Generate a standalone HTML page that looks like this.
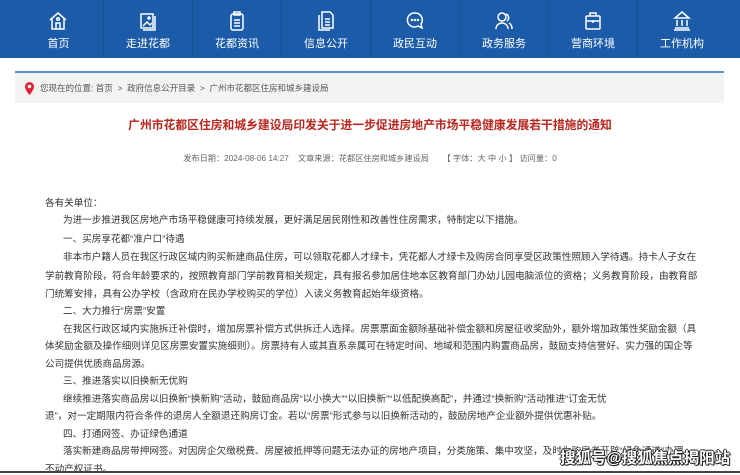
<!DOCTYPE html>
<html><head><meta charset="utf-8"><style>
*{margin:0;padding:0;box-sizing:border-box}
body{width:740px;height:473px;overflow:hidden;background:#fff;font-family:"Liberation Sans","Noto Sans CJK SC",sans-serif;position:relative}
.nav{position:absolute;left:0;top:0;width:740px;height:58px;background:#1b5ba8}
.it{position:absolute;top:0;width:89px;height:58px;color:#fff;text-align:center;font-size:11px;border-left:1px solid #16508f}
.it svg{position:absolute;left:35px;top:11px}
.it span{position:absolute;left:0;right:0;top:35px}
.line{position:absolute;left:15px;top:71px;width:709px;height:2px;background:#5a8fd0}
.bc{position:absolute;left:15px;top:73px;width:709px;height:30px;background:#f3f3f3;font-size:8.5px;color:#555;line-height:30px;padding-left:25px}
.pin{position:absolute;left:10px;top:9px}
.title{position:absolute;top:116px;left:0;width:740px;text-align:center;color:#b8261e;font-weight:bold;font-size:11.8px}
.meta{position:absolute;top:152px;left:0;width:740px;text-align:center;color:#666;font-size:8.2px}
.t{position:absolute;font-size:9.6px;color:#333;white-space:nowrap}
.wm{position:absolute;left:560px;top:446px;font-size:15.5px;font-weight:bold;color:#fff;text-shadow:-1px 0 #222,1px 0 #222,0 -1px #222,0 1px #222,1px 1px #222}
.bot{position:absolute;left:0;top:471px;width:740px;height:2px;background:#444}
</style></head><body>
<div class="nav">
<div class="it" style="left:14px;border-left:none"><svg width="18" height="20" viewBox="0 0 18 20" fill="none" stroke="#fff" stroke-width="1.5"><path d="M1 9L9 2l8 7M3 8v10h12V8M7 18v-6h4v6"/><circle cx="9" cy="8" r="1.3"/></svg><span>首页</span></div>
<div class="it" style="left:103px"><svg width="18" height="20" viewBox="0 0 18 20" fill="none" stroke="#fff" stroke-width="1.5"><rect x="2" y="3" width="12" height="14"/><path d="M16 5v14H4M4 15l4-4 3 3 2-2"/><circle cx="10" cy="7" r="1"/></svg><span>走进花都</span></div>
<div class="it" style="left:192px"><svg width="18" height="20" viewBox="0 0 18 20" fill="none" stroke="#fff" stroke-width="1.5"><rect x="3" y="3" width="12" height="16" rx="2"/><rect x="6" y="1" width="6" height="3"/><path d="M6 9h6M6 12h6M6 15h6"/></svg><span>花都资讯</span></div>
<div class="it" style="left:281px"><svg width="18" height="20" viewBox="0 0 18 20" fill="none" stroke="#fff" stroke-width="1.5"><path d="M5 1h8l3 3v13H5z"/><path d="M2 4v15h11M8 8h5M8 11h5M8 14h5"/></svg><span>信息公开</span></div>
<div class="it" style="left:370px"><svg width="18" height="20" viewBox="0 0 18 20" fill="none" stroke="#fff" stroke-width="1.5"><path d="M9 2a7 7 0 1 0 3 13l4 2-1-4A7 7 0 0 0 9 2z"/><circle cx="6" cy="9" r=".5"/><circle cx="9" cy="9" r=".5"/><circle cx="12" cy="9" r=".5"/></svg><span>政民互动</span></div>
<div class="it" style="left:459px"><svg width="18" height="20" viewBox="0 0 18 20" fill="none" stroke="#fff" stroke-width="1.5"><circle cx="7" cy="6" r="4"/><path d="M1 18c0-4 3-6 6-6s6 2 6 6M11 3a4 4 0 0 1 1 7M14 12c2 1 3 3 3 6"/></svg><span>政务服务</span></div>
<div class="it" style="left:548px"><svg width="18" height="20" viewBox="0 0 18 20" fill="none" stroke="#fff" stroke-width="1.5"><rect x="2" y="5" width="14" height="13" rx="1"/><path d="M6 5V2h6v3M2 10h14M9 9v3"/></svg><span>营商环境</span></div>
<div class="it" style="left:637px"><svg width="18" height="20" viewBox="0 0 18 20" fill="none" stroke="#fff" stroke-width="1.5"><path d="M9 1l7 6H2z M4 9v6M9 9v6M14 9v6M2 17h14M1 19h16"/></svg><span>工作机构</span></div>
</div>
<div class="line"></div>
<div class="bc"><svg class="pin" width="9" height="13" viewBox="0 0 9 13"><path d="M4.5 0A4.5 4.5 0 0 0 0 4.5C0 8 4.5 13 4.5 13S9 8 9 4.5A4.5 4.5 0 0 0 4.5 0z" fill="#d23"/><circle cx="4.5" cy="4.5" r="1.8" fill="#fff"/></svg>您现在的位置: 首页 &nbsp;&gt;&nbsp; 政府信息公开目录 &nbsp;&gt;&nbsp; 广州市花都区住房和城乡建设局</div>
<div class="title">广州市花都区住房和城乡建设局印发关于进一步促进房地产市场平稳健康发展若干措施的通知</div>
<div class="meta">发布日期：2024-08-06 14:27 &nbsp;&nbsp; 文章来源：花都区住房和城乡建设局 &nbsp;&nbsp;&nbsp;&nbsp; 【 字体：大 中 小 】 访问量：0</div>
<div class="t" style="left:45px;top:195px">各有关单位：</div>
<div class="t" style="left:63px;top:212px">为进一步推进我区房地产市场平稳健康可持续发展，更好满足居民刚性和改善性住房需求，特制定以下措施。</div>
<div class="t" style="left:63px;top:231px">一、买房享花都“准户口”待遇</div>
<div class="t" style="left:63px;top:249px">非本市户籍人员在我区行政区域内购买新建商品住房，可以领取花都人才绿卡，凭花都人才绿卡及购房合同享受区政策性照顾入学待遇。持卡人子女在</div>
<div class="t" style="left:45px;top:268px">学前教育阶段，符合年龄要求的，按照教育部门学前教育相关规定，具有报名参加居住地本区教育部门办幼儿园电脑派位的资格；义务教育阶段，由教育部</div>
<div class="t" style="left:45px;top:286px">门统筹安排，具有公办学校（含政府在民办学校购买的学位）入读义务教育起始年级资格。</div>
<div class="t" style="left:63px;top:303px">二、大力推行“房票”安置</div>
<div class="t" style="left:63px;top:321px">在我区行政区域内实施拆迁补偿时，增加房票补偿方式供拆迁人选择。房票票面金额除基础补偿金额和房屋征收奖励外，额外增加政策性奖励金额（具</div>
<div class="t" style="left:45px;top:338px">体奖励金额及操作细则详见区房票安置实施细则）。房票持有人或其直系亲属可在特定时间、地域和范围内购置商品房，鼓励支持信誉好、实力强的国企等</div>
<div class="t" style="left:45px;top:356px">公司提供优质商品房源。</div>
<div class="t" style="left:63px;top:373px">三、推进落实以旧换新无优购</div>
<div class="t" style="left:63px;top:391px">继续推进落实商品房以旧换新“换新购”活动，鼓励商品房“以小换大”“以旧换新”“以低配换高配”，并通过“换新购”活动推进“订金无忧</div>
<div class="t" style="left:45px;top:408px">退”，对一定期限内符合条件的退房人全额退还购房订金。若以“房票”形式参与以旧换新活动的，鼓励房地产企业额外提供优惠补贴。</div>
<div class="t" style="left:63px;top:426px">四、打通网签、办证绿色通道</div>
<div class="t" style="left:63px;top:443px">落实新建商品房带押网签。对因房企欠缴税费、房屋被抵押等问题无法办证的房地产项目，分类施策、集中攻坚，及时为购房者开辟“绿色通道”办理</div>
<div class="t" style="left:45px;top:461px">不动产权证书。</div>
<div class="wm">搜狐号@搜狐焦点揭阳站</div>
<div class="bot"></div>
</body></html>
